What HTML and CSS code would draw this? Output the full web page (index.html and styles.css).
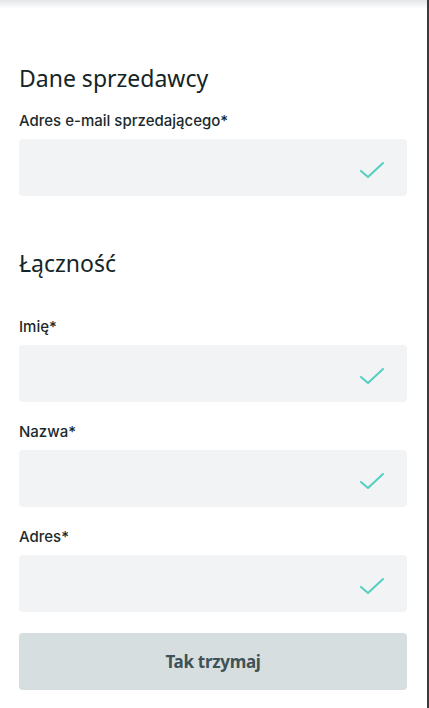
FILE: index.html
```html
<!DOCTYPE html>
<html lang="pl">
<head>
<meta charset="utf-8">
<link rel="stylesheet" href="styles.css">
</head>
<body>
<div class="page">
  <div class="topshade"></div>
  <form class="form">
    <h2 class="heading first">Dane sprzedawcy</h2>
    <div class="field">
      <label class="label">Adres e-mail sprzedającego*</label>
      <div class="input"><svg class="check" viewBox="0 0 26 18" width="26" height="18"><path d="M2 10 L9 16 L24 2" fill="none" stroke="#52cfc0" stroke-width="2" stroke-linecap="round" stroke-linejoin="round"/></svg></div>
    </div>
    <h2 class="heading second">Łączność</h2>
    <div class="field">
      <label class="label">Imię*</label>
      <div class="input"><svg class="check" viewBox="0 0 26 18" width="26" height="18"><path d="M2 10 L9 16 L24 2" fill="none" stroke="#52cfc0" stroke-width="2" stroke-linecap="round" stroke-linejoin="round"/></svg></div>
    </div>
    <div class="field">
      <label class="label">Nazwa*</label>
      <div class="input"><svg class="check" viewBox="0 0 26 18" width="26" height="18"><path d="M2 10 L9 16 L24 2" fill="none" stroke="#52cfc0" stroke-width="2" stroke-linecap="round" stroke-linejoin="round"/></svg></div>
    </div>
    <div class="field">
      <label class="label">Adres*</label>
      <div class="input"><svg class="check" viewBox="0 0 26 18" width="26" height="18"><path d="M2 10 L9 16 L24 2" fill="none" stroke="#52cfc0" stroke-width="2" stroke-linecap="round" stroke-linejoin="round"/></svg></div>
    </div>
    <button type="button" class="submit">Tak trzymaj</button>
  </form>
</div>
</body>
</html>
```
FILE: styles.css
```css
html, body {
  margin: 0;
  padding: 0;
  background: #ffffff;
}
body {
  font-family: "Open Sans", "Noto Sans", sans-serif;
  color: #1b2a2c;
}
.page {
  width: 427px;
  height: 708px;
  border-right: 2px solid #3a3a3a;
  overflow: hidden;
}
.topshade {
  height: 9px;
  background: linear-gradient(#e3e6e8, #ffffff);
}
.form {
  padding: 0 20px 0 19px;
  display: flex;
  flex-direction: column;
}
.heading {
  margin: 0;
  font-family: "Noto Sans", sans-serif;
  font-weight: 400;
  font-size: 23px;
  line-height: 30px;
  color: #152426;
}
.heading.first {
  margin-top: 54px;
}
.heading.second {
  margin-top: 52px;
  margin-bottom: 39px;
}
.field {
  display: flex;
  flex-direction: column;
}
.first + .field {
  margin-top: 18px;
}
.field + .field {
  margin-top: 20px;
}
.label {
  font-family: "Inter", sans-serif;
  font-weight: 500;
  font-size: 15px;
  line-height: 20px;
  color: #1b2a2c;
  margin-bottom: 8px;
}
.input {
  height: 57px;
  background: #f1f3f4;
  border-radius: 4px;
  display: flex;
  align-items: center;
  justify-content: flex-end;
  padding-right: 22px;
}
.check {
  display: block;
  margin-top: 4px;
}
.submit {
  margin-top: 21px;
  height: 57px;
  border: none;
  border-radius: 4px;
  background: #d7dee0;
  font-family: "Noto Sans", sans-serif;
  font-weight: 700;
  font-size: 17px;
  color: #3e5257;
  letter-spacing: -0.3px;
}
```
